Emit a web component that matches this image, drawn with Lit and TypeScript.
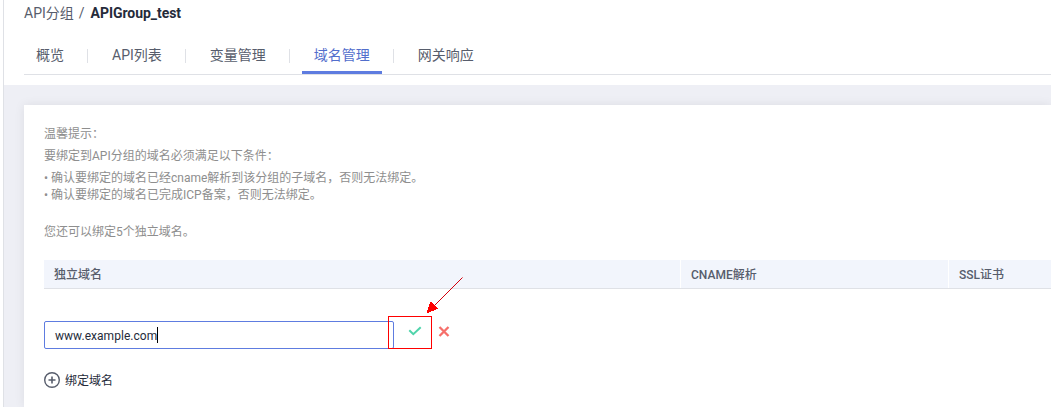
import { LitElement, html, css } from "lit";
import { customElement, state } from "lit/decorators.js";
import { classMap } from "lit/directives/class-map.js";

@customElement("app-root")
export class AppRoot extends LitElement {
  static styles = css`
    :host {
      display: block;
      width: 100%;
      height: 100vh;
      overflow: hidden;
      font-family: Roboto, "Noto Sans CJK SC", sans-serif;
      font-size: 12px;
      color: #252b3a;
      background: #fff;
    }
    * { box-sizing: border-box; }
    .page {
      position: relative;
      display: flex;
      flex-direction: column;
      height: 100%;
      margin-left: 3px;
      border-left: 1px solid #dfe1e6;
    }
    .top { height: 85px; padding-left: 20px; flex: none; }
    .crumbs {
      display: flex;
      height: 36px;
      padding-top: 3px;
      font-size: 14px;
      line-height: 20px;
      color: #575d6c;
      white-space: pre;
    }
    .crumbs .slash { margin: 0 6px 0 5px; }
    .crumbs b { font-weight: 700; color: #252b3a; letter-spacing: -0.05px; }
    .tabs {
      display: flex;
      height: 39px;
      border-bottom: 1px solid #dfe1e6;
      font-size: 14px;
      line-height: 38px;
      color: #575d6c;
    }
    .tab { height: 38px; padding: 0 12px; white-space: nowrap; flex: none; }
    .tab.active { color: #526ecc; border-bottom: 3px solid #5e7ce0; }
    .sep { width: 1px; height: 14px; margin: 13px 12px 0 11px; background: #dfe1e6; flex: none; }
    .body { flex: 1; padding: 20px 0 0 20px; background: #eeeff5; overflow: hidden; }
    .card {
      height: 100%;
      padding: 18px 0 0 20px;
      background: #fff;
      box-shadow: 0 0 10px rgba(0, 0, 0, 0.08);
    }
    .tips { height: 137px; color: #8e8e8e; white-space: nowrap; }
    .tips p { margin: 0; line-height: 22px; }
    .tips ul { margin: 3px 0 17px; padding: 0; list-style: none; line-height: 17px; }
    .tips li { height: 17px; }
    .head {
      display: grid;
      grid-template-columns: 636px 268px 1fr;
      height: 29px;
      border-bottom: 1px solid #dfe1e6;
      background: #f2f5fc;
      color: #575d6c;
      line-height: 30px;
      font-weight: 500;
    }
    .head span { height: 28px; padding-left: 10px; }
    .head span + span { border-left: 1px solid #fff; }
    .edit { display: flex; height: 28px; margin-top: 32px; }
    .field {
      display: flex;
      align-items: center;
      width: 350px;
      height: 28px;
      padding-left: 10px;
      border: 1px solid #5e7ce0;
      border-radius: 2px;
      color: #252b3a;
    }
    .field span { padding-top: 2px; letter-spacing: 0.04px; }
    .caret { width: 1px; height: 16px; background: #000; }
    .ok { width: 14px; height: 10px; margin: 5px 0 0 14px; }
    .no { width: 12px; height: 11px; margin: 5px 0 0 16px; }
    .add { display: flex; align-items: center; height: 18px; margin-top: 22px; }
    .add svg { width: 16px; height: 16px; margin-right: 5px; }
    .add span { margin-top: -1px; }
    .mark { position: absolute; left: 384px; top: 270px; width: 90px; height: 84px; }
  `;

  @state() private current = 3;
  private tabs = ["概览", "API列表", "变量管理", "域名管理", "网关响应"];

  render() {
    return html`
      <div class="page">
        <header class="top">
          <div class="crumbs"><span>API分组</span><span class="slash">/</span><b>APIGroup_test</b></div>
          <nav class="tabs">
            ${this.tabs.map((t, i) => html`
              ${i ? html`<i class="sep"></i>` : ""}
              <div class=${classMap({ tab: true, active: i === this.current })}
                @click=${() => (this.current = i)}>${t}</div>`)}
          </nav>
        </header>
        <main class="body">
          <section class="card">
            <div class="tips">
              <p>温馨提示：</p>
              <p>要绑定到API分组的域名必须满足以下条件：</p>
              <ul>
                <li>• 确认要绑定的域名已经cname解析到该分组的子域名，否则无法绑定。</li>
                <li>• 确认要绑定的域名已完成ICP备案，否则无法绑定。</li>
              </ul>
              <p>您还可以绑定5个独立域名。</p>
            </div>
            <div class="head"><span>独立域名</span><span>CNAME解析</span><span>SSL证书</span></div>
            <div class="edit">
              <div class="field"><span>www.example.com</span><i class="caret"></i></div>
              <svg class="ok" viewBox="0 0 14 10"><path d="M1.3 4.2 5.3 8.2 12.7 1.2" fill="none" stroke="#50d4ab" stroke-width="2"/></svg>
              <svg class="no" viewBox="0 0 12 11"><path d="M1.5 1 10.5 10M10.5 1 1.5 10" fill="none" stroke="#f66f6a" stroke-width="2.3"/></svg>
            </div>
            <div class="add">
              <svg viewBox="0 0 16 16"><circle cx="8" cy="8" r="7.3" fill="none" stroke="#575d6c" stroke-width="1.4"/><path d="M8 4.5v7M4.5 8h7" stroke="#575d6c" stroke-width="1.6"/></svg>
              <span>绑定域名</span>
            </div>
          </section>
        </main>
        <svg class="mark" viewBox="0 0 90 84">
          <rect x="0.5" y="46.5" width="43" height="32" fill="none" stroke="#f00"/>
          <path d="M74.5 7.5 44.5 37.5" stroke="#d4000c" stroke-width="1"/>
          <path d="M38.5 43.5 42.5 31.5 50.5 38.5Z" fill="#f00" shape-rendering="crispEdges"/>
        </svg>
      </div>`;
  }
}
